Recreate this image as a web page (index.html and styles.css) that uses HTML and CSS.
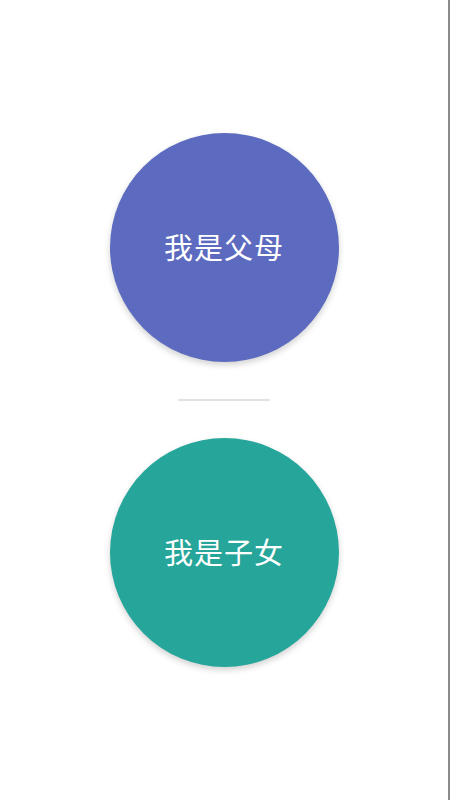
FILE: index.html
```html
<!DOCTYPE html>
<html>
<head>
    <meta charset="UTF-8">
    <title>选择身份</title>
    <link rel="stylesheet" href="styles.css">
</head>
<body>
    <div class="page">
        <div class="role role-parent">我是父母</div>
        <div class="divider"></div>
        <div class="role role-child">我是子女</div>
    </div>
</body>
</html>
```

FILE: styles.css
```css
html, body {
    margin: 0;
    padding: 0;
    background-color: #fff;
}

body {
    font-family: "Noto Sans CJK SC", "Noto Sans", sans-serif;
}

.page {
    height: 800px;
    box-sizing: border-box;
    border-right: 2px solid #8a8a8a;
    display: flex;
    flex-direction: column;
    align-items: center;
    justify-content: center;
}

.role {
    width: 229px;
    height: 229px;
    border-radius: 50%;
    display: flex;
    align-items: center;
    justify-content: center;
    padding-bottom: 3px;
    box-sizing: border-box;
    color: #fff;
    font-size: 29px;
    letter-spacing: 1px;
    box-shadow: 0 3px 6px rgba(0, 0, 0, 0.18);
}

.role-parent {
    background-color: #5c6bc0;
}

.role-child {
    background-color: #26a69a;
}

.divider {
    width: 92px;
    height: 2px;
    background-color: #e2e2e2;
    margin: 37px 0;
}
```
